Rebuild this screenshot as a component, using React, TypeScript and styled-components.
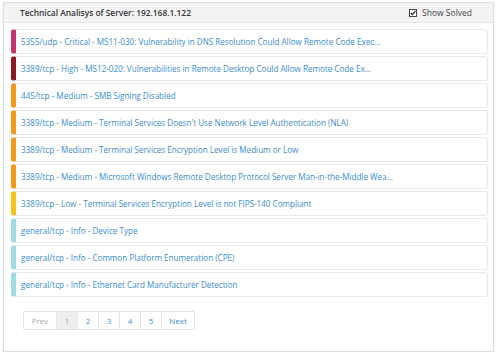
import React from 'react';
import styled, { createGlobalStyle } from 'styled-components';

const GlobalStyle = createGlobalStyle`
    html, body {
        margin: 0;
        padding: 0;
        background: #ffffff;
        font-family: 'Open Sans', 'Liberation Sans', sans-serif;
    }
`;

const Panel = styled.div`
    margin: 2px 6px 0 3px;
    height: 348px;
    border: 1px solid #dedede;
    box-shadow: 0 1px 2px rgba(0, 0, 0, 0.08);
    background: #ffffff;
    display: flex;
    flex-direction: column;
`;

const Header = styled.div`
    height: 19px;
    display: flex;
    align-items: center;
    justify-content: space-between;
    padding: 0 21px 0 16px;
    background: #f3f3f3;
    border-bottom: 1px solid #e4e4e4;
`;

const Title = styled.h3`
    margin: 0;
    font-size: 8.4px;
    font-weight: 600;
    color: #333333;
`;

const Toggle = styled.label`
    display: flex;
    align-items: center;
    gap: 5px;
    font-size: 8.5px;
    color: #444444;
`;

const Body = styled.div`
    padding: 6px 5px 0 7px;
    display: flex;
    flex-direction: column;
    gap: 2px;
`;

const Row = styled.div<{ $color: string }>`
    height: 23px;
    display: flex;
    align-items: center;
    padding-left: 5px;
    border: 1px solid #e9e9e9;
    border-left: 5px solid ${(p) => p.$color};
    border-radius: 3px;
    background: #ffffff;
`;

const RowLink = styled.a`
    font-size: 8.1px;
    color: #3a8dd0;
    text-decoration: none;
    white-space: nowrap;
`;

const Pager = styled.ul`
    list-style: none;
    margin: 14px 0 0 19px;
    padding: 0;
    display: flex;
    align-self: flex-start;
    border: 1px solid #e2e2e2;
    border-radius: 2px;
`;

const PageItem = styled.li<{ $active?: boolean; $disabled?: boolean; $wide?: boolean }>`
    width: ${(p) => (p.$wide ? '32px' : '20px')};
    height: 17px;
    display: flex;
    align-items: center;
    justify-content: center;
    font-size: 8px;
    border-left: 1px solid #e6e6e6;
    background: ${(p) => (p.$active ? '#eeeeee' : '#ffffff')};
    color: ${(p) => (p.$active || p.$disabled ? '#a8a8a8' : '#3a8dd0')};

    &:first-child {
        border-left: none;
    }
`;

const issues = [
    { color: '#c8326f', text: '5355/udp - Critical - MS11-030: Vulnerability in DNS Resolution Could Allow Remote Code Exec...' },
    { color: '#8c1a20', text: '3389/tcp - High - MS12-020: Vulnerabilities in Remote Desktop Could Allow Remote Code Ex...' },
    { color: '#f39a1c', text: '445/tcp - Medium - SMB Signing Disabled' },
    { color: '#f39a1c', text: "3389/tcp - Medium - Terminal Services Doesn't Use Network Level Authentication (NLA)" },
    { color: '#f39a1c', text: '3389/tcp - Medium - Terminal Services Encryption Level is Medium or Low' },
    { color: '#f39a1c', text: '3389/tcp - Medium - Microsoft Windows Remote Desktop Protocol Server Man-in-the-Middle Wea...' },
    { color: '#f7c21c', text: '3389/tcp - Low - Terminal Services Encryption Level is not FIPS-140 Compliant' },
    { color: '#9fdbe0', text: 'general/tcp - Info - Device Type' },
    { color: '#9fdbe0', text: 'general/tcp - Info - Common Platform Enumeration (CPE)' },
    { color: '#9fdbe0', text: 'general/tcp - Info - Ethernet Card Manufacturer Detection' },
];

function CheckIcon() {
    return (
        <svg width="8" height="8" viewBox="0 0 8 8">
            <rect x="0.5" y="0.5" width="7" height="7" fill="#ffffff" stroke="#444444" />
            <path d="M1.8 4 L3.4 5.6 L6.4 2" fill="none" stroke="#333333" strokeWidth="1.3" />
        </svg>
    );
}

function App() {
    return (
        <>
            <GlobalStyle />
            <Panel>
                <Header>
                    <Title>Technical Analisys of Server: 192.168.1.122</Title>
                    <Toggle>
                        <CheckIcon />
                        Show Solved
                    </Toggle>
                </Header>
                <Body>
                    {issues.map((issue, i) => (
                        <Row key={i} $color={issue.color}>
                            <RowLink href="#">{issue.text}</RowLink>
                        </Row>
                    ))}
                </Body>
                <Pager>
                    <PageItem $wide $disabled>Prev</PageItem>
                    <PageItem $active>1</PageItem>
                    <PageItem>2</PageItem>
                    <PageItem>3</PageItem>
                    <PageItem>4</PageItem>
                    <PageItem>5</PageItem>
                    <PageItem $wide>Next</PageItem>
                </Pager>
            </Panel>
        </>
    );
}

export default App;
